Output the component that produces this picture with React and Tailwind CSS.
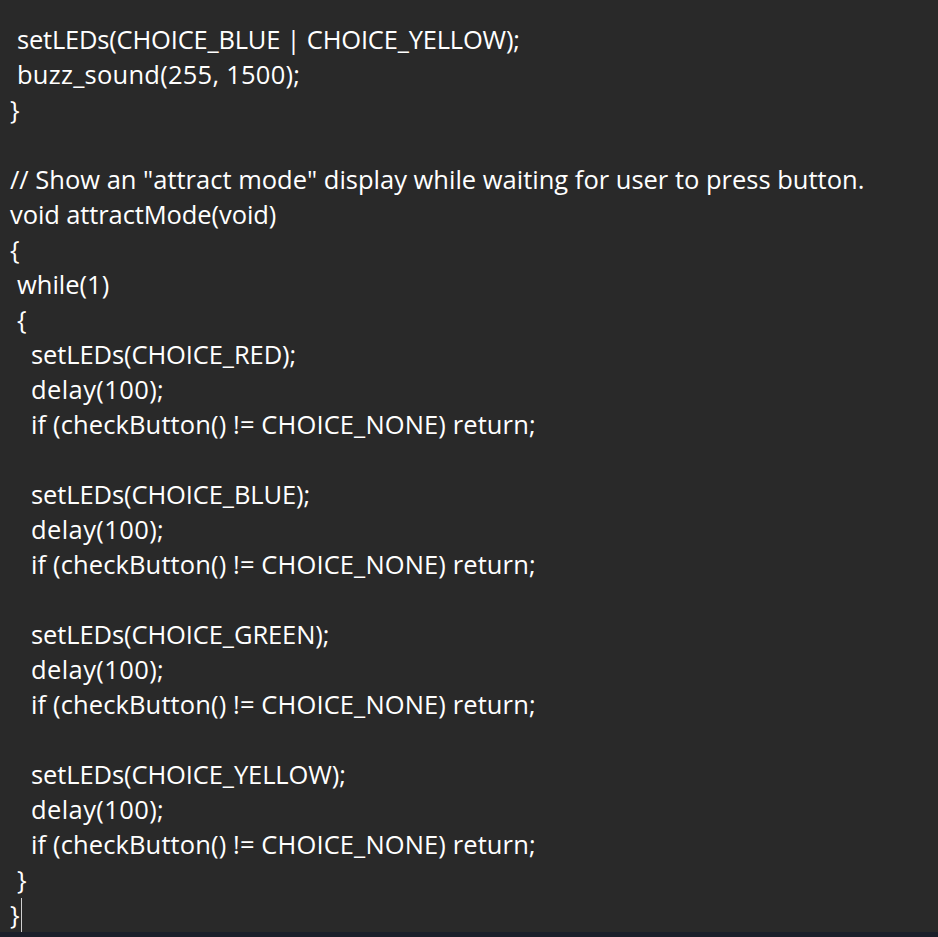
export default function App() {
  const lines = [
    [1, "setLEDs(CHOICE_BLUE | CHOICE_YELLOW);", "tracking-[-0.2px]"],
    [1, "buzz_sound(255, 1500);", "tracking-[0.25px]"],
    [0, "}", ""],
    [0, "", ""],
    [0, '// Show an "attract mode" display while waiting for user to press button.', ""],
    [0, "void attractMode(void)", "tracking-[-0.1px]"],
    [0, "{", ""],
    [1, "while(1)", ""],
    [1, "{", ""],
    [2, "setLEDs(CHOICE_RED);", "tracking-[-0.1px]"],
    [2, "delay(100);", "tracking-[0.4px]"],
    [2, "if (checkButton() != CHOICE_NONE) return;", "tracking-[0.12px]"],
    [0, "", ""],
    [2, "setLEDs(CHOICE_BLUE);", "tracking-[-0.1px]"],
    [2, "delay(100);", "tracking-[0.4px]"],
    [2, "if (checkButton() != CHOICE_NONE) return;", "tracking-[0.12px]"],
    [0, "", ""],
    [2, "setLEDs(CHOICE_GREEN);", "tracking-[-0.1px]"],
    [2, "delay(100);", "tracking-[0.4px]"],
    [2, "if (checkButton() != CHOICE_NONE) return;", "tracking-[0.12px]"],
    [0, "", ""],
    [2, "setLEDs(CHOICE_YELLOW);", "tracking-[-0.1px]"],
    [2, "delay(100);", "tracking-[0.4px]"],
    [2, "if (checkButton() != CHOICE_NONE) return;", "tracking-[0.12px]"],
    [1, "}", ""],
  ];
  const pad = ["pl-[10px]", "pl-[17px]", "pl-[31px]"];
  return (
    <div className="w-[938px] h-[937px] bg-[#292929] flex flex-col overflow-hidden">
      <div
        className="flex-1 pt-[22px] text-white text-[25.5px] leading-[35px] overflow-hidden"
        style={{ fontFamily: "'Open Sans', 'Noto Sans', sans-serif" }}
      >
        {lines.map(([lvl, t, tr], i) => (
          <div key={i} className={`h-[35px] whitespace-pre ${pad[lvl]} ${tr}`}>
            {t}
          </div>
        ))}
        <div className="h-[35px] pl-[10px] flex items-start">
          <span>{"}"}</span>
          <span className="ml-[1px] mt-[1px] w-[1px] h-[34px] bg-[#d0d0d0]"></span>
        </div>
      </div>
      <div className="h-[5px] bg-[#1b1f2a]"></div>
    </div>
  );
}
